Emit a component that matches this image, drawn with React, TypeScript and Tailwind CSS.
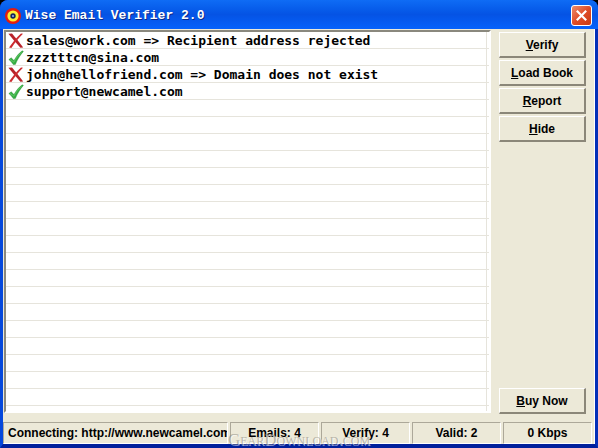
import { ReactNode } from 'react';

type Result = {
    text: string;
    valid: boolean;
};

const results: Result[] = [
    { text: 'sales@work.com => Recipient address rejected', valid: false },
    { text: 'zzztttcn@sina.com', valid: true },
    { text: 'john@hellofriend.com => Domain does not exist', valid: false },
    { text: 'support@newcamel.com', valid: true },
];

const stats = ['Emails: 4', 'Verify: 4', 'Valid: 2', '0 Kbps'];

function AppIcon() {
    return (
        <svg width="16" height="16" viewBox="0 0 16 16" aria-hidden="true">
            <circle cx="8" cy="8" r="8" fill="#e51c0c" />
            <circle cx="8" cy="8" r="5.6" fill="#ffee35" />
            <circle cx="8" cy="8" r="2.7" fill="#14245c" />
            <circle cx="8" cy="8" r="0.9" fill="#a8c4ff" />
        </svg>
    );
}

function CheckIcon() {
    return (
        <svg width="16" height="16" viewBox="0 0 16 16" role="img" aria-label="Valid">
            <path d="M0.8 9.6 L3.2 7.8 L6 10.6 C8 6.8 11 3 14.2 0.8 L15.4 1.4 C12 5.4 9.2 9.8 7.4 14.4 L5.2 14.6 C4 12.6 2.6 11 0.8 9.6 Z" fill="#35ad42" stroke="#2a9038" strokeWidth="0.4" />
            <path d="M2.2 9.4 L5.8 12.2 C8 8 10.6 4.8 13.6 2.2" fill="none" stroke="#62c864" strokeWidth="0.9" />
        </svg>
    );
}

function CrossIcon() {
    return (
        <svg width="16" height="16" viewBox="0 0 16 16" role="img" aria-label="Invalid">
            <path d="M0.4 0.8 L4 0.6 C7.4 4.6 11.4 9.6 15.2 14.4 L12.4 14.8 C8.8 10.8 4.6 6 0.4 0.8 Z" fill="#b8222a" />
            <path d="M13 0.4 L15 0.8 C10.8 5 6.6 9.8 3.4 15 L1 14.6 C4.4 9.4 8.4 4.6 13 0.4 Z" fill="#cc2c30" />
        </svg>
    );
}

function CommandButton({ children }: { children: ReactNode }) {
    return (
        <button
            type="button"
            className="h-[26px] w-full border-t border-r-2 border-b-2 border-l border-t-white border-r-[#8b8779] border-b-[#8b8779] border-l-white bg-[#ece9d8] text-center text-xs leading-4 font-bold text-black"
        >
            {children}
        </button>
    );
}

export default function App() {
    return (
        <div className="bg-black">
            <div className="flex h-screen flex-col overflow-hidden rounded-t-lg bg-[#0831d9] font-['Liberation_Sans',Arial,sans-serif]">
                <header className="flex h-[29px] shrink-0 items-center gap-1 bg-linear-to-b from-[#0f6cf5] via-[#0553e4] to-[#0562fc] pt-0.5 pr-1.5 pl-[5px]">
                    <AppIcon />
                    <h1 className="grow font-['Liberation_Mono',monospace] text-[13px] leading-4 font-bold text-white [text-shadow:1px_1px_0_#0a2a88]">
                        Wise Email Verifier 2.0
                    </h1>
                    <button
                        type="button"
                        aria-label="Close"
                        className="flex size-[21px] items-center justify-center rounded-[3px] border border-white bg-linear-to-br from-[#eb8b6a] via-[#df4c27] to-[#c83a12]"
                    >
                        <svg width="13" height="13" viewBox="0 0 13 13" aria-hidden="true">
                            <path d="M1.8 1.8 L11.2 11.2 M11.2 1.8 L1.8 11.2" stroke="#fff" strokeWidth="2.2" />
                        </svg>
                    </button>
                </header>

                <div className="flex min-h-0 grow flex-col border-r-3 border-b-4 border-l-3 border-r-[#0430b8] border-b-[#00209c] border-l-[#0648dc] bg-[#ece9d8] text-xs font-bold text-black">
                    <main className="flex min-h-0 grow gap-2 border-r border-white pt-px pr-2 pl-px">
                        <div className="mb-px flex min-w-0 grow border-2 border-t-[#8a887e] border-r-white border-b-white border-l-[#8a887e] bg-[repeating-linear-gradient(#fff_0_16px,#e6e4dc_16px_17px)]">
                            <ul className="min-w-0 grow border-r border-[#e6e4dc] font-['DejaVu_Sans_Mono',monospace] text-[13px] leading-4">
                                {results.map((result) => (
                                    <li key={result.text} className="flex h-[17px] items-center gap-0.5 pl-0.5 whitespace-pre">
                                        {result.valid ? <CheckIcon /> : <CrossIcon />}
                                        <span>{result.text}</span>
                                    </li>
                                ))}
                            </ul>
                            <div className="w-0.5" />
                        </div>

                        <nav className="flex w-[87px] shrink-0 flex-col gap-0.5 pt-0.5">
                            <CommandButton><u>V</u>erify</CommandButton>
                            <CommandButton><u>L</u>oad Book</CommandButton>
                            <CommandButton><u>R</u>eport</CommandButton>
                            <CommandButton><u>H</u>ide</CommandButton>
                            <div className="grow" />
                            <CommandButton><u>B</u>uy Now</CommandButton>
                        </nav>
                    </main>

                    <footer className="relative flex h-[30px] shrink-0 gap-0.5 border-r border-white pt-2 pr-0.5 leading-[21px]">
                        <p className="min-w-0 grow overflow-hidden border border-t-[#aca899] border-r-white border-b-white border-l-[#aca899] pl-1 whitespace-nowrap">
                            Connecting: http://www.newcamel.com
                        </p>
                        {stats.map((stat) => (
                            <p key={stat} className="w-[89px] shrink-0 border border-t-[#aca899] border-r-white border-b-white border-l-[#aca899] text-center">
                                {stat}
                            </p>
                        ))}
                        <span className="pointer-events-none absolute top-[18px] left-[225px] font-['Liberation_Serif',serif] text-[17px] leading-4 font-normal whitespace-nowrap text-[#8f8d84]/60 [font-variant:small-caps] [text-shadow:1px_1px_0_#ffffff99]">
                            GearDownload.com
                        </span>
                    </footer>
                </div>
            </div>
        </div>
    );
}
